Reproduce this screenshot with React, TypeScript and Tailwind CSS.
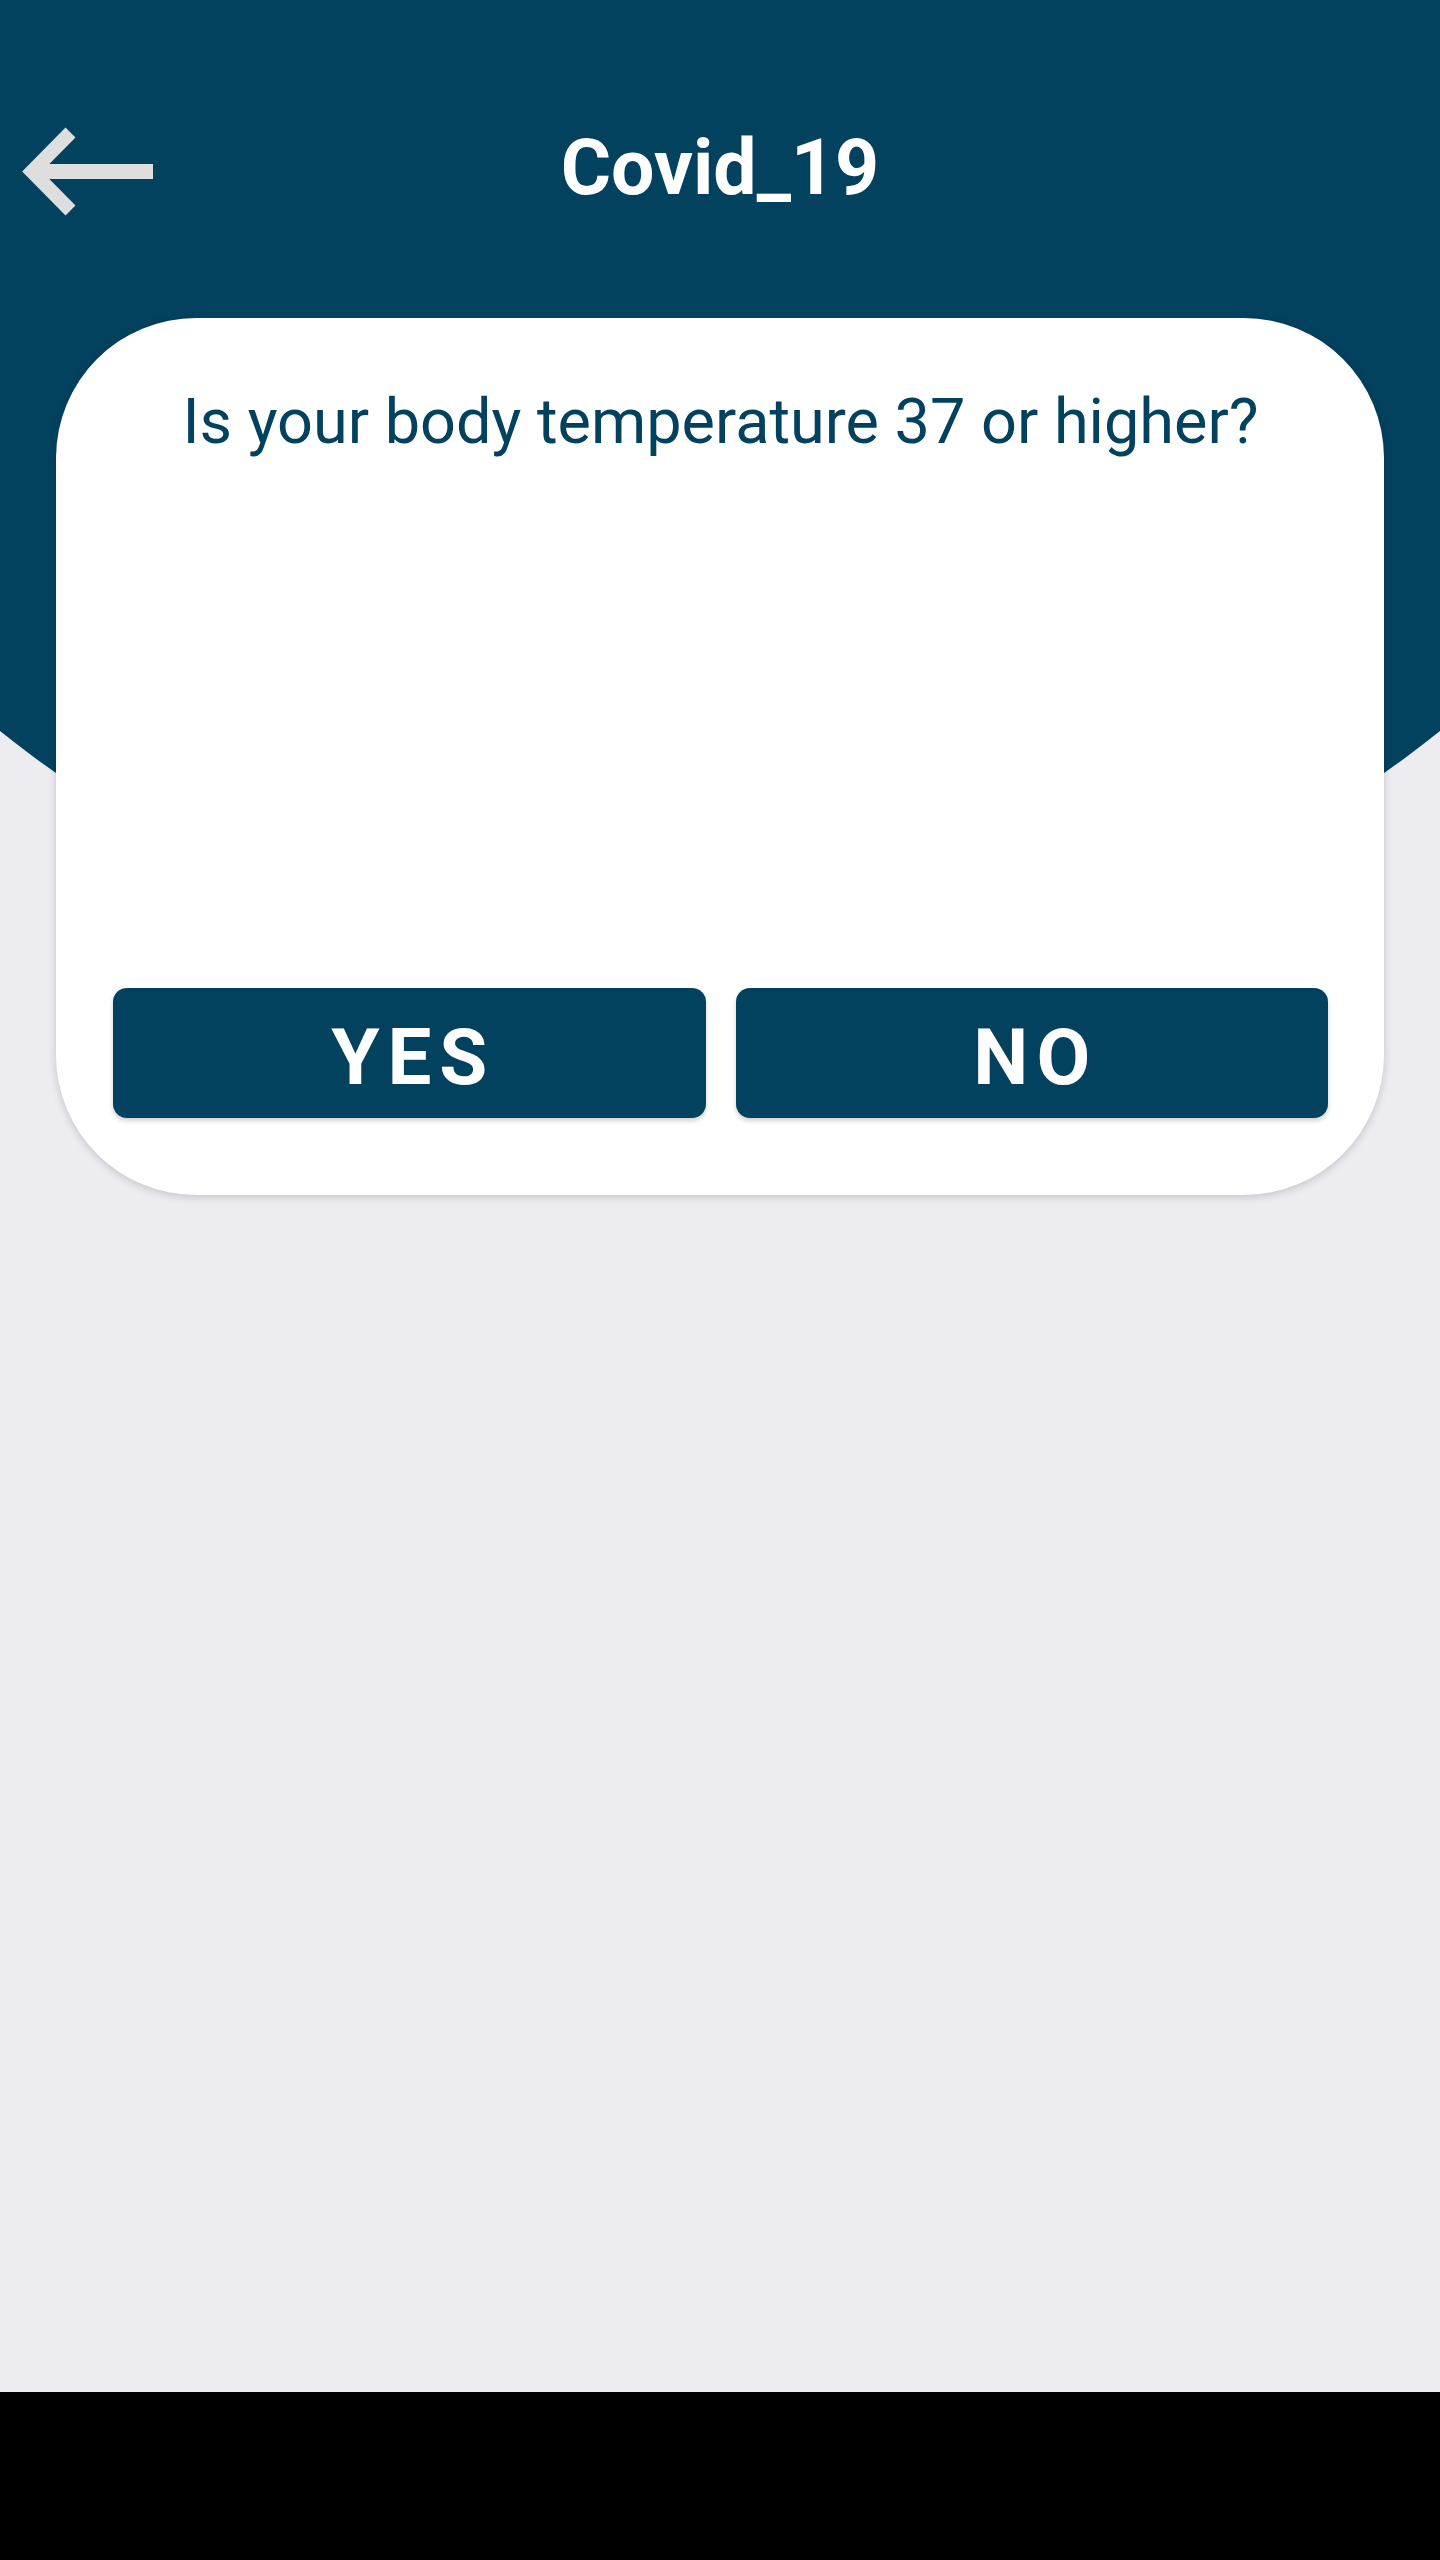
export default function App() {
  return (
    <div
      className="relative flex h-[2560px] w-full flex-col overflow-hidden bg-[#edecf1]"
      style={{ fontFamily: "Roboto, 'Liberation Sans', sans-serif" }}
    >
      {/* curved header background */}
      <div className="absolute left-[-435px] top-[-1327px] h-[2310px] w-[2310px] rounded-full bg-[#03425f]" />

      <main className="relative z-10 flex-1">
        <header className="grid grid-cols-[1fr_auto_1fr] items-start pt-[121px]">
          <button className="ml-[16px] h-[100px] w-[140px]" aria-label="Back">
            <svg viewBox="0 0 140 100" className="h-[100px] w-[140px]">
              <path d="M54.5 11.5 L16 50.5 L54.5 89.5" fill="none" stroke="#dedede" strokeWidth="14" strokeLinejoin="miter" strokeMiterlimit="4" />
              <path d="M22 50.5 H137" stroke="#dedede" strokeWidth="15" />
            </svg>
          </button>
          <h1 className="mt-[2px] text-[77px] font-bold leading-[90px] text-white">Covid_19</h1>
          <div />
        </header>

        <section className="mx-[56px] mt-[97px] rounded-[140px] bg-white pb-[77px] pl-[57px] pr-[56px] pt-[66px] shadow-[0_2px_8px_rgba(0,0,0,0.18)]">
          <p className="text-center text-[63px] leading-[75px] text-[#03425f]">
            Is your body temperature 37 or higher?
          </p>
          <div className="mt-[529px] grid grid-cols-2 gap-[30px]">
            <button className="flex h-[130px] items-center justify-center rounded-[14px] bg-[#03425f] pl-[8px] pt-[8px] text-[78px] font-bold tracking-[8px] text-white shadow-[0_3px_5px_rgba(0,0,0,0.18)]">
              YES
            </button>
            <button className="flex h-[130px] items-center justify-center rounded-[14px] bg-[#03425f] pl-[8px] pt-[8px] text-[78px] font-bold tracking-[8px] text-white shadow-[0_3px_5px_rgba(0,0,0,0.18)]">
              NO
            </button>
          </div>
        </section>
      </main>

      <div className="relative z-10 h-[168px] bg-black" />
    </div>
  );
}
